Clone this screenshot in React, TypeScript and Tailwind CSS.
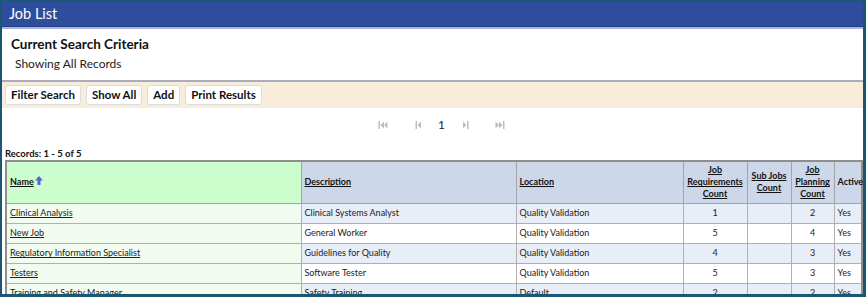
import { ReactNode } from "react";

type Job = {
  name: string;
  desc: string;
  location: string;
  req: number;
  sub: string;
  plan: number;
  active: string;
};

const JOBS: Job[] = [
  { name: "Clinical Analysis", desc: "Clinical Systems Analyst", location: "Quality Validation", req: 1, sub: "", plan: 2, active: "Yes" },
  { name: "New Job", desc: "General Worker", location: "Quality Validation", req: 5, sub: "", plan: 4, active: "Yes" },
  { name: "Regulatory Information Specialist", desc: "Guidelines for Quality", location: "Quality Validation", req: 4, sub: "", plan: 3, active: "Yes" },
  { name: "Testers", desc: "Software Tester", location: "Quality Validation", req: 5, sub: "", plan: 3, active: "Yes" },
  { name: "Training and Safety Manager", desc: "Safety Training", location: "Default", req: 2, sub: "", plan: 2, active: "Yes" },
];

function PagerIcon({ kind }: { kind: "first" | "prev" | "next" | "last" }) {
  const fill = "#bdbdbd";
  return (
    <svg width="10" height="10" viewBox="0 0 10 10">
      {kind === "first" && (
        <>
          <rect x="0.5" y="1" width="1.5" height="8" fill={fill} />
          <polygon points="6,1.5 2.5,5 6,8.5" fill={fill} />
          <polygon points="9.5,1.5 6,5 9.5,8.5" fill={fill} />
        </>
      )}
      {kind === "prev" && (
        <>
          <rect x="2.5" y="1" width="1.5" height="8" fill={fill} />
          <polygon points="8,1.5 4.5,5 8,8.5" fill={fill} />
        </>
      )}
      {kind === "next" && (
        <>
          <polygon points="2,1.5 5.5,5 2,8.5" fill={fill} />
          <rect x="6" y="1" width="1.5" height="8" fill={fill} />
        </>
      )}
      {kind === "last" && (
        <>
          <polygon points="0.5,1.5 4,5 0.5,8.5" fill={fill} />
          <polygon points="4,1.5 7.5,5 4,8.5" fill={fill} />
          <rect x="8" y="1" width="1.5" height="8" fill={fill} />
        </>
      )}
    </svg>
  );
}

function ToolButton({ children }: { children: ReactNode }) {
  return (
    <button className="h-[20px] px-[5px] bg-white border border-[#dcdcdc] rounded-[3px] text-[11.5px] font-bold text-[#111] leading-none">
      {children}
    </button>
  );
}

function Th({ children, className = "" }: { children: ReactNode; className?: string }) {
  return (
    <th className={`border border-[#a3a3a3] px-[3px] text-[9px] font-bold text-[#111] leading-[12px] ${className}`}>
      {children}
    </th>
  );
}

export default function App() {
  return (
    <div
      className="w-[866px] h-[297px] overflow-hidden bg-white border-t border-l-2 border-r-[3px] border-b-[3px] border-[#1d5673]"
      style={{ fontFamily: "Lato, 'Liberation Sans', sans-serif" }}
    >
      {/* Title */}
      <div className="h-[26px] bg-[#2e4d9c] border-b border-[#213f86] flex items-center px-[7px]">
        <span className="text-white text-[14.5px]">Job List</span>
      </div>
      <div className="h-[2px] bg-[#a9b9de]" />

      {/* Search criteria */}
      <div className="h-[53px] px-[9px] pt-[6px] border-b-2 border-[#a9adbd]">
        <div className="text-[13.5px] font-bold text-[#111] leading-[18px]">Current Search Criteria</div>
        <div className="text-[12px] text-[#222] leading-[16px] mt-[3px] pl-[4px]">Showing All Records</div>
      </div>

      {/* Toolbar */}
      <div className="h-[26px] bg-[#f8ecda] flex items-center gap-[5px] px-[3px]">
        <ToolButton>Filter Search</ToolButton>
        <ToolButton>Show All</ToolButton>
        <ToolButton>Add</ToolButton>
        <ToolButton>Print Results</ToolButton>
      </div>

      {/* Pager */}
      <div className="h-[34px] flex items-center pl-[376px]">
        <PagerIcon kind="first" />
        <span className="ml-[25px]"><PagerIcon kind="prev" /></span>
        <span className="ml-[15px] text-[12px] text-[#222]">1</span>
        <span className="ml-[16px]"><PagerIcon kind="next" /></span>
        <span className="ml-[24px]"><PagerIcon kind="last" /></span>
      </div>

      <div className="pl-[3px] pt-[6px] text-[9.5px] font-bold text-[#111] leading-[12px]">Records: 1 - 5 of 5</div>

      {/* Table */}
      <div className="pl-[3px]">
        <table className="w-[858px] border-collapse border-2 border-[#8e8e8e] table-fixed">
          <colgroup>
            <col className="w-[295px]" />
            <col className="w-[215px]" />
            <col className="w-[167px]" />
            <col className="w-[64px]" />
            <col className="w-[44px]" />
            <col className="w-[43px]" />
            <col />
          </colgroup>
          <thead>
            <tr className="h-[42px]">
              <Th className="bg-[#ccfdcc] text-left">
                <span className="inline-flex items-center">
                  <span className="underline">Name</span>
                  <svg width="8" height="9" viewBox="0 0 8 9" className="ml-[1px] -mt-[4px]">
                    <polygon points="4,0 8,4.5 5.5,4.5 5.5,9 2.5,9 2.5,4.5 0,4.5" fill="#5f61d0" />
                  </svg>
                </span>
              </Th>
              <Th className="bg-[#ccd7e9] text-left"><span className="underline">Description</span></Th>
              <Th className="bg-[#ccd7e9] text-left"><span className="underline">Location</span></Th>
              <Th className="bg-[#ccd7e9] text-center"><span className="underline">Job Requirements Count</span></Th>
              <Th className="bg-[#ccd7e9] text-center"><span className="underline">Sub Jobs Count</span></Th>
              <Th className="bg-[#ccd7e9] text-center"><span className="underline">Job Planning Count</span></Th>
              <Th className="bg-[#ccd7e9] text-left">Active</Th>
            </tr>
          </thead>
          <tbody>
            {JOBS.map((job, i) => {
              const rowBg = i % 2 === 0 ? "bg-[#e7eef8]" : "bg-white";
              const cell = `border border-[#b0b0b0] px-[3px] text-[9px] text-[#222] ${rowBg}`;
              return (
                <tr key={job.name} className="h-[20px]">
                  <td className="border border-[#b0b0b0] px-[3px] text-[9px] text-[#222] bg-[#f1fbef]">
                    <span className="underline">{job.name}</span>
                  </td>
                  <td className={cell}>{job.desc}</td>
                  <td className={cell}>{job.location}</td>
                  <td className={`${cell} text-center`}>{job.req}</td>
                  <td className={`${cell} text-center`}>{job.sub}</td>
                  <td className={`${cell} text-center`}>{job.plan}</td>
                  <td className={cell}>{job.active}</td>
                </tr>
              );
            })}
          </tbody>
        </table>
      </div>
    </div>
  );
}
